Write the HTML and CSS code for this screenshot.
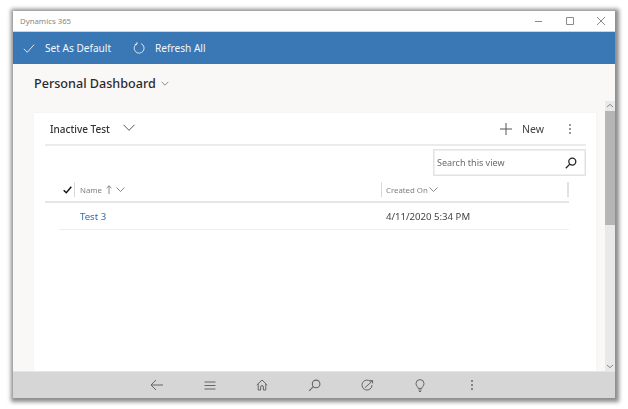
FILE: index.html
```html
<!DOCTYPE html>
<html lang="en">
<head>
<meta charset="utf-8">
<title>Dynamics 365</title>
<link rel="stylesheet" href="styles.css">
</head>
<body>
<div class="window">
  <header class="titlebar">
    <span class="app-name">Dynamics 365</span>
    <div class="win-controls">
      <svg class="win-icon" width="10" height="10" viewBox="0 0 10 10"><path d="M1 5.5h7"/></svg>
      <svg class="win-icon" width="10" height="10" viewBox="0 0 10 10"><path d="M1.5 1.5h7v7h-7z"/></svg>
      <svg class="win-icon" width="10" height="10" viewBox="0 0 10 10"><path d="M1 1l8 8M9 1l-8 8"/></svg>
    </div>
  </header>
  <nav class="commandbar">
    <div class="command">
      <svg width="12" height="12" viewBox="0 0 14 14"><path d="M1 8l4 4 8-9"/></svg>
      <span>Set As Default</span>
    </div>
    <div class="command command-refresh">
      <svg width="12" height="12" viewBox="0 0 14 14"><path d="M4.2 2.2A5.8 5.8 0 1 0 9.5 1.9M4.6 0.2v2.6H2"/></svg>
      <span>Refresh All</span>
    </div>
  </nav>
  <main class="content">
    <div class="scrollarea">
      <div class="dash-head">
        <h1 class="dash-title">Personal Dashboard</h1>
        <svg class="chev-small" width="8" height="5" viewBox="0 0 9 6"><path d="M0.5 1l4 4 4-4"/></svg>
      </div>
      <section class="card">
        <div class="card-head">
          <div class="card-title-wrap">
            <h2 class="card-title">Inactive Test</h2>
            <svg class="chev-large" width="12" height="7" viewBox="0 0 12 7"><path d="M0.5 0.8l5.5 5.5 5.5-5.5"/></svg>
          </div>
          <div class="card-actions">
            <svg class="plus" width="12" height="12" viewBox="0 0 12 12"><path d="M6 0v12M0 6h12"/></svg>
            <span class="new-label">New</span>
            <div class="kebab kebab-card"><i></i><i></i><i></i></div>
          </div>
        </div>
        <div class="search-row">
          <div class="search">
            <span>Search this view</span>
            <svg width="12" height="12" viewBox="0 0 12 12"><circle cx="7.3" cy="4.6" r="3.5"/><path d="M4.8 7.1L0.8 11.2"/></svg>
          </div>
        </div>
        <div class="grid-wrap">
          <div class="grid-head">
            <div class="col-check">
              <svg width="9" height="8" viewBox="0 0 9 8"><path d="M0.7 4.2l2.6 2.6L8.3 0.8"/></svg>
            </div>
            <div class="col-name col-head">
              <span>Name</span>
              <svg class="arrow" width="6" height="9" viewBox="0 0 6 9"><path d="M3 9V0.8M0.6 3L3 0.8 5.4 3"/></svg>
              <svg class="chev-head" width="9" height="5" viewBox="0 0 9 5"><path d="M0.5 0.5l4 4 4-4"/></svg>
            </div>
            <div class="col-date col-head">
              <span>Created On</span>
              <svg class="chev-head" width="9" height="5" viewBox="0 0 9 5"><path d="M0.5 0.5l4 4 4-4"/></svg>
            </div>
          </div>
          <div class="grid-row">
            <a class="row-name">Test 3</a>
            <span class="row-date">4/11/2020 5:34 PM</span>
          </div>
        </div>
      </section>
    </div>
    <aside class="scrollbar">
      <svg class="sb-arrow" width="10" height="10" viewBox="0 0 10 10"><path d="M2 6l3-2.6L8 6"/></svg>
      <div class="sb-thumb"></div>
      <div class="sb-fill"></div>
      <svg class="sb-arrow" width="10" height="10" viewBox="0 0 10 10"><path d="M2 4l3 2.6L8 4"/></svg>
    </aside>
  </main>
  <footer class="bottombar">
    <svg width="14" height="12" viewBox="0 0 14 12"><path d="M13 6H1M6 1L1 6l5 5"/></svg>
    <svg width="12" height="9" viewBox="0 0 12 9"><path d="M0.5 1h11M0.5 4.5h11M0.5 8h11"/></svg>
    <svg width="12" height="12" viewBox="0 0 12 12"><path d="M0.8 6L6 1l5.2 5M2.2 5v6h2.4V8a1.4 1.4 0 0 1 2.8 0v3h2.4V5"/></svg>
    <svg width="13" height="13" viewBox="0 0 12 12"><circle cx="7.5" cy="4.5" r="3.5"/><path d="M5 7L1 11"/></svg>
    <svg width="13" height="13" viewBox="0 0 13 13"><path d="M9.6 2.6A5 5 0 1 0 11 6"/><path d="M4 8.6L11.4 2M8.6 1.6h3v2.8"/></svg>
    <svg width="10" height="13" viewBox="0 0 10 13"><path d="M3.2 9.4C3 7.6 1 7 1 4.6a4 4 0 0 1 8 0C9 7 7 7.6 6.8 9.4zM3.4 11h3.2M4 12.5h2"/></svg>
    <div class="kebab kebab-bottom"><i></i><i></i><i></i></div>
  </footer>
</div>
</body>
</html>
```
FILE: styles.css
```css
* { box-sizing: border-box; }
html, body { height: 100%; }
body {
  margin: 0;
  padding: 11px 13px 11px;
  background: #fff;
  font-family: "Noto Sans", "Open Sans", sans-serif;
  overflow: hidden;
}
svg { fill: none; stroke: currentColor; flex: none; display: block; }
h1, h2 { margin: 0; font-weight: 500; }

.window {
  width: 602px;
  height: 387px;
  display: flex;
  flex-direction: column;
  background: #fff;
  box-shadow: 1px 1px 4px 3px #8c8c8c;
  filter: blur(0.4px);
}

.titlebar {
  height: 21px;
  flex: none;
  display: flex;
  align-items: center;
  justify-content: space-between;
  padding-left: 7px;
  background: #fff;
  border-bottom: 1px solid #c5d6e8;
}
.app-name { font-size: 7.8px; color: #888; }
.win-controls { display: flex; align-items: center; gap: 21px; padding-right: 9px; color: #8a8a8a; }

.commandbar {
  height: 32px;
  flex: none;
  display: flex;
  align-items: center;
  padding-left: 10px;
  background: #3a77b5;
  color: #f4f7fb;
  font-size: 10.1px;
}
.command { display: flex; align-items: center; gap: 10px; }
.command-refresh { margin-left: 22px; }

.content { flex: 1; min-height: 0; display: flex; background: #faf8f7; }
.scrollarea { flex: 1; min-width: 0; display: flex; flex-direction: column; padding: 0 9px 0 21px; }
.dash-head { height: 49px; flex: none; display: flex; align-items: center; gap: 5px; padding-bottom: 11px; }
.dash-title { font-size: 12.6px; color: #2b2b2b; }
.chev-small { color: #777; margin-top: 1px; }

.card { flex: 1; background: #fff; box-shadow: 0 0 1px #e6e4e2; padding: 0 10px 0 11px; }
.card-head {
  height: 33px;
  display: flex;
  align-items: center;
  justify-content: space-between;
  border-bottom: 2px solid #ebebeb;
  padding-left: 5px;
}
.card-title-wrap { display: flex; align-items: center; gap: 13px; }
.card-title { font-size: 10px; color: #333; }
.chev-large { color: #555; margin-top: -2px; }
.card-actions { display: flex; align-items: center; color: #444; padding-right: 15px; }
.new-label { font-size: 10.5px; margin-left: 10px; color: #444; }
.plus { color: #555; }
.kebab { display: flex; flex-direction: column; align-items: center; gap: 2px; width: 2px; }
.kebab i { width: 2px; height: 2px; border-radius: 50%; background: #777; display: block; }
.kebab-card { margin-left: 25px; }

.search-row { display: flex; justify-content: flex-end; height: 30px; }
.search {
  width: 153px;
  height: 27px;
  margin-top: 3px;
  display: flex;
  align-items: center;
  justify-content: space-between;
  padding: 0 8px 0 3px;
  border: 1px solid #e2e2e2;
  box-shadow: inset 0 0 0 1px #f0f0f0;
  font-size: 9px;
  color: #6a6a6a;
}
.search svg { color: #222; stroke-width: 1.3; }

.grid-wrap { width: 524px; }
.grid-head {
  height: 27px;
  display: flex;
  align-items: stretch;
  border-bottom: 2px solid #e5e5e5;
  padding: 6px 0 4px;
  font-size: 7.8px;
  color: #808080;
}
.col-check { width: 29px; display: flex; justify-content: flex-end; align-items: center; padding-right: 2px; color: #111; }
.col-check svg { stroke-width: 1.4; }
.col-head { display: flex; align-items: center; border-left: 1px solid #d9d9d9; padding-left: 5px; }
.col-name { width: 307px; gap: 4px; }
.col-date { flex: 1; gap: 1px; border-right: 2px solid #e2e2e2; padding-left: 4px; }
.col-head svg { color: #888; }
.grid-row {
  height: 27px;
  margin-left: 14px;
  display: flex;
  align-items: center;
  border-bottom: 1px solid #eeeeee;
  font-size: 9.6px;
}
.row-name { width: 307px; padding-left: 21px; color: #2c6fb0; }
.row-date { padding-left: 20px; color: #444; white-space: nowrap; }

.scrollbar { width: 10px; flex: none; display: flex; flex-direction: column; margin-top: 37px; background: #e9e9e9; color: #8a8a8a; }
.sb-arrow { height: 10px; }
.sb-thumb { height: 114px; flex: none; background: #b5b5b5; }
.sb-fill { flex: 1; }

.bottombar {
  height: 27px;
  flex: none;
  display: grid;
  grid-template-columns: repeat(7, 52.5px);
  justify-items: center;
  align-items: center;
  padding-left: 118px;
  background: #d6d6d6;
  border-top: 1px solid #e5e5e5;
  color: #666;
}
.kebab-bottom i { background: #666; }
```
